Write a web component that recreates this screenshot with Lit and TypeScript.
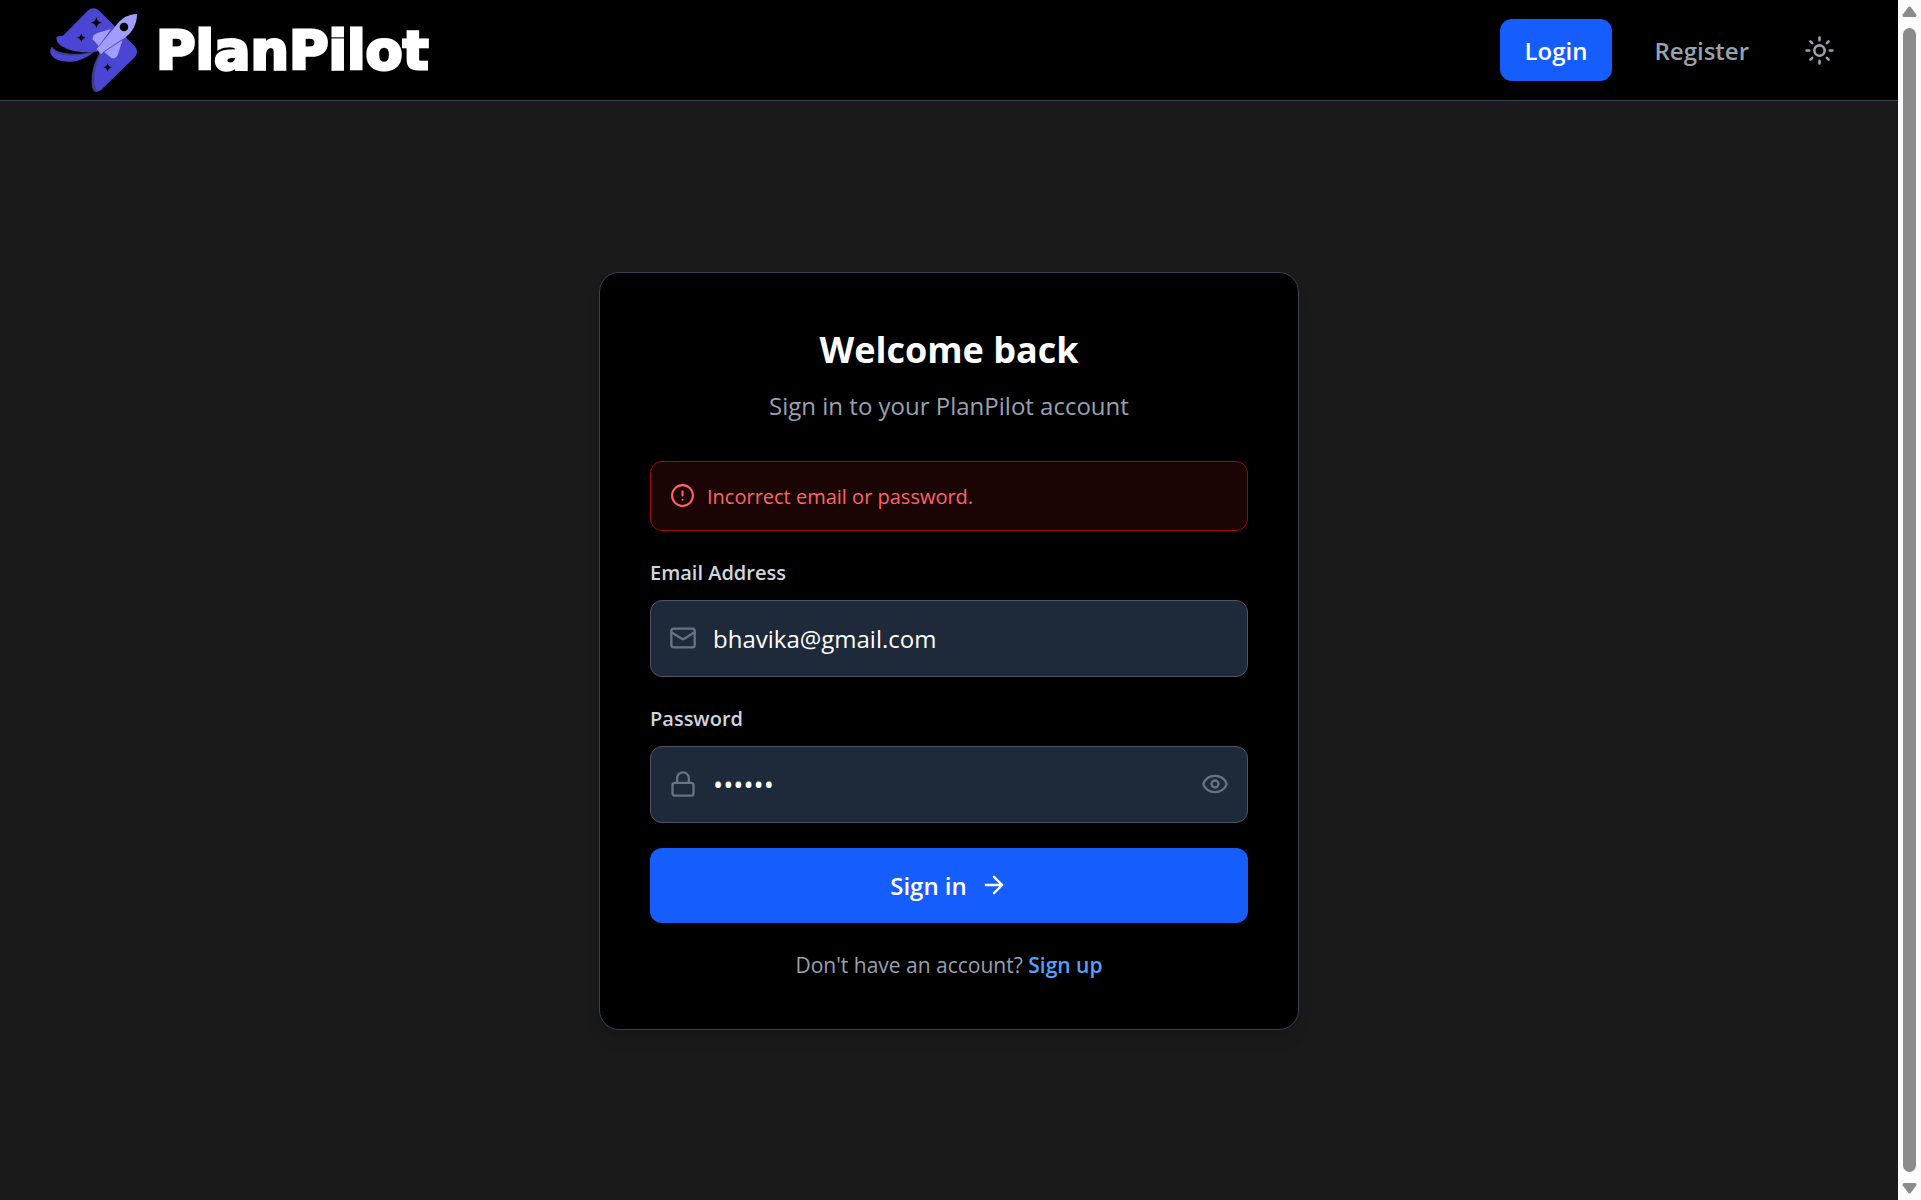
import { LitElement, html, css, svg } from "lit";
import { customElement, state } from "lit/decorators.js";

const star = (x: number, y: number, r: number) => svg`
  <path fill="#000" d="M${x} ${y - r}Q${x + 2} ${y - 2} ${x + r} ${y}Q${x + 2} ${y + 2} ${x} ${y + r}Q${x - 2} ${y + 2} ${x - r} ${y}Q${x - 2} ${y - 2} ${x} ${y - r}Z"/>`;

const logoMark = html`
  <svg class="mark" viewBox="30 20 264 258" aria-hidden="true">
    <path fill="#3f3d86" d="M37 140C50 160 105 168 165 152C130 172 85 184 55 174C34 166 27 150 37 140Z"/>
    <path fill="#4a46d3" d="M36 140C42 166 95 176 163 154C130 182 88 191 54 179C32 170 25 152 36 140Z"/>
    <path fill="#3f3d86" d="M180 158C160 185 152 225 156 258C158 275 168 279 178 272L200 240Z"/>
    <path fill="#4a46d3" d="M143 31Q160 17 178 31L284 138Q298 154 284 171L184 268Q174 276 168 268C158 245 162 200 180 164L176 153C130 160 88 154 60 134Q46 122 50 110Q54 106 66 107Q72 104 78 97Z"/>
    ${star(169, 67, 17)}${star(124, 112, 13)}${star(203, 201, 13)}
    <path fill="#a29dfb" d="M291 41C266 42 246 52 231 72L170 146L183 162L192 153L255 112C280 94 291 68 291 41Z"/>
    <path fill="#a29dfb" d="M213 86L172 98Q157 104 158 117L177 138Z"/>
    <path fill="#a29dfb" d="M247 120L234 162Q228 178 214 173L192 154Z"/>
    <path stroke="#4a46d3" stroke-width="2" d="M217 85L177 137M193 154L248 117" fill="none"/>
    <circle cx="252" cy="80" r="13" fill="#000"/>
  </svg>`;

@customElement("app-root")
export class AppRoot extends LitElement {
  @state() private showPassword = false;

  static styles = css`
    :host {
      display: block;
      font-family: "Segoe UI", "Open Sans", "Noto Sans", sans-serif;
      color: #fff;
    }
    * { box-sizing: border-box; }
    svg { display: block; flex: none; }
    a { text-decoration: none; }
    button { font: inherit; border: 0; cursor: pointer; }
    .window {
      display: grid;
      grid-template-columns: minmax(0, 1fr) 23px;
      min-height: 100vh;
      background: #1a1a1a;
    }
    .page { display: flex; flex-direction: column; }
    .header {
      display: flex;
      align-items: center;
      justify-content: space-between;
      height: 101px;
      padding: 0 50px;
      background: #000;
      border-bottom: 1px solid #364153;
    }
    .brand { display: flex; align-items: center; gap: 18px; color: #fff; }
    .mark { width: 88px; height: 86px; }
    .name {
      padding-top: 2px;
      font-family: "DejaVu Sans", Verdana, sans-serif;
      font-weight: 700;
      font-size: 54px;
      line-height: 80px;
      -webkit-text-stroke: 3px #fff;
    }
    .nav { display: flex; align-items: center; gap: 17px; font-size: 24px; font-weight: 600; line-height: 38px; }
    .nav-link { padding: 13px 25px 11px; border-radius: 12px; color: #99a1af; }
    .nav-link.active { background: #155dfc; color: #fff; }
    .theme { display: flex; padding: 13px; background: none; color: #99a1af; }
    .main { flex: 1; display: flex; align-items: center; justify-content: center; padding: 40px; }
    .card {
      width: 100%;
      max-width: 700px;
      padding: 50px;
      background: #000;
      border: 1px solid #364153;
      border-radius: 20px;
      box-shadow: 0 12px 18px -4px rgb(0 0 0 / 0.1), 0 5px 8px -5px rgb(0 0 0 / 0.1);
    }
    .title { margin: 0; text-align: center; font-size: 36px; line-height: 54px; font-weight: 700; }
    .subtitle { margin: 10px 0 36px; text-align: center; font-size: 24px; line-height: 38px; color: #99a1af; }
    .alert {
      display: flex;
      align-items: center;
      gap: 12px;
      height: 70px;
      padding: 0 19px;
      background: #1a0404;
      border: 1px solid #9f0712;
      border-radius: 12px;
      color: #ff6467;
      font-size: 20px;
    }
    .alert-text { padding-top: 2px; }
    .form { display: flex; flex-direction: column; gap: 25px; margin-top: 25px; }
    .field { display: flex; flex-direction: column; gap: 10px; }
    .label { font-size: 20px; line-height: 34px; font-weight: 600; color: #d1d5dc; }
    .box {
      display: flex;
      align-items: center;
      gap: 16px;
      height: 77px;
      padding: 0 18px;
      background: #1e2939;
      border: 1px solid #4a5565;
      border-radius: 12px;
      color: #6a7282;
    }
    .input {
      flex: 1;
      min-width: 0;
      padding: 2px 0 0;
      border: 0;
      outline: 0;
      background: none;
      color: #fff;
      font: inherit;
      font-size: 24px;
      line-height: 38px;
    }
    .input[type="password"] { font-size: 27px; }
    .reveal { display: flex; padding: 0; background: none; color: #6a7282; }
    .submit {
      display: flex;
      align-items: center;
      justify-content: center;
      gap: 13px;
      height: 75px;
      border-radius: 12px;
      background: #155dfc;
      color: #fff;
      font-size: 24px;
      font-weight: 600;
    }
    .footer { margin: 28px 0 0; text-align: center; font-size: 21px; line-height: 28px; color: #99a1af; }
    .signup { color: #51a2ff; font-weight: 600; }
    .scrollbar {
      display: flex;
      flex-direction: column;
      align-items: center;
      gap: 11px;
      padding: 6px 0;
      background: #fcfcfc;
    }
    .thumb { flex: 1; width: 13px; border-radius: 7px; background: #8b8b8b; }
  `;

  private icon(size: number, body: unknown, width = 2) {
    return html`<svg width=${size} height=${size} viewBox="0 0 24 24" fill="none" stroke="currentColor"
      stroke-width=${width} stroke-linecap="round" stroke-linejoin="round" aria-hidden="true">${body}</svg>`;
  }

  private submit(event: Event) {
    event.preventDefault();
  }

  render() {
    return html`
      <div class="window">
        <div class="page">
          <header class="header">
            <a class="brand" href="#">${logoMark}<span class="name">PlanPilot</span></a>
            <nav class="nav">
              <a class="nav-link active" href="#login">Login</a>
              <a class="nav-link" href="#register">Register</a>
              <button class="theme" type="button" aria-label="Toggle theme">
                ${this.icon(31, svg`<circle cx="12" cy="12" r="4"/><path d="M12 2v2M12 20v2M4.93 4.93l1.41 1.41M17.66 17.66l1.41 1.41M2 12h2M20 12h2M6.34 17.66l-1.41 1.41M19.07 4.93l-1.41 1.41"/>`)}
              </button>
            </nav>
          </header>
          <main class="main">
            <section class="card">
              <h1 class="title">Welcome back</h1>
              <p class="subtitle">Sign in to your PlanPilot account</p>
              <div class="alert" role="alert">
                ${this.icon(25, svg`<circle cx="12" cy="12" r="10"/><path d="M12 8v4M12 16h.01"/>`)}
                <span class="alert-text">Incorrect email or password.</span>
              </div>
              <form class="form" @submit=${this.submit}>
                <div class="field">
                  <label class="label" for="email">Email Address</label>
                  <div class="box">
                    ${this.icon(28, svg`<rect x="2" y="4" width="20" height="16" rx="2"/><path d="m2 7 8.97 5.7a1.94 1.94 0 0 0 2.06 0L22 7"/>`)}
                    <input class="input" id="email" type="email" .value=${"bhavika@gmail.com"}>
                  </div>
                </div>
                <div class="field">
                  <label class="label" for="password">Password</label>
                  <div class="box">
                    ${this.icon(28, svg`<rect x="3" y="11" width="18" height="11" rx="2"/><path d="M7 11V7a5 5 0 0 1 10 0v4"/>`)}
                    <input class="input" id="password" type=${this.showPassword ? "text" : "password"} .value=${"secret"}>
                    <button class="reveal" type="button" aria-label="Show password"
                      @click=${() => (this.showPassword = !this.showPassword)}>
                      ${this.icon(28, svg`<path d="M2.06 12.35a1 1 0 0 1 0-.7 10.75 10.75 0 0 1 19.88 0 1 1 0 0 1 0 .7 10.75 10.75 0 0 1-19.88 0"/><circle cx="12" cy="12" r="3"/>`)}
                    </button>
                  </div>
                </div>
                <button class="submit" type="submit">
                  <span>Sign in</span>
                  ${this.icon(28, svg`<path d="M5 12h14M12 5l7 7-7 7"/>`)}
                </button>
              </form>
              <p class="footer">Don't have an account? <a class="signup" href="#register">Sign up</a></p>
            </section>
          </main>
        </div>
        <div class="scrollbar" aria-hidden="true">
          <svg width="15" height="11" viewBox="0 0 15 11"><path d="M7.5 2L13 9.500H2Z" fill="#8b8b8b" stroke="#8b8b8b" stroke-width="3" stroke-linejoin="round"/></svg>
          <div class="thumb"></div>
          <svg width="15" height="11" viewBox="0 0 15 11"><path d="M7.500 9L13 1.500H2Z" fill="#8b8b8b" stroke="#8b8b8b" stroke-width="3" stroke-linejoin="round"/></svg>
        </div>
      </div>`;
  }
}
